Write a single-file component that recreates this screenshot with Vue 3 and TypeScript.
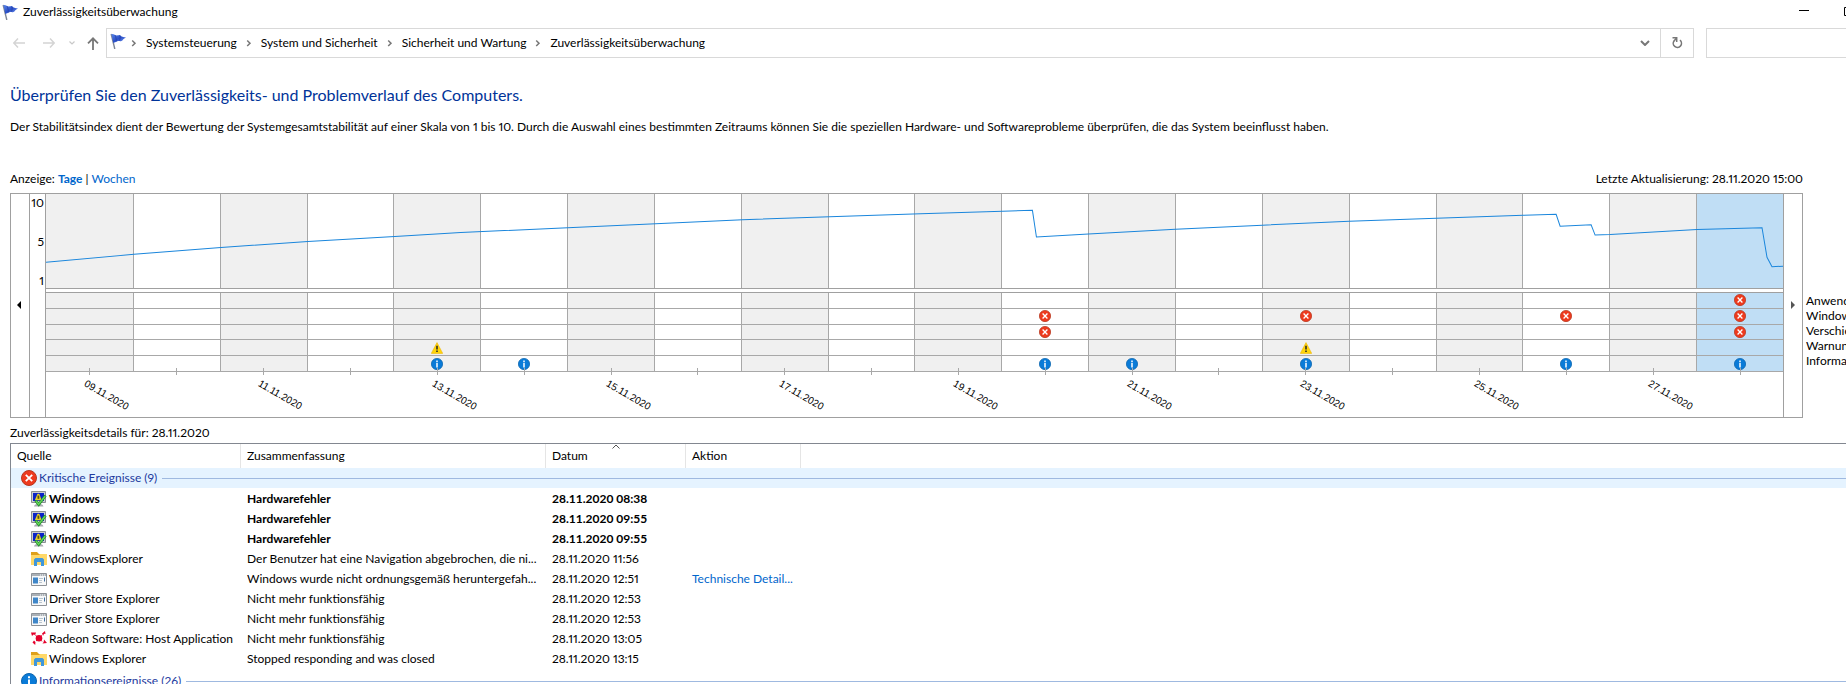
<script setup lang="ts">
import { ref } from 'vue'

type Kind = 'error' | 'warning' | 'info'
type SourceIcon = 'hardware' | 'folder' | 'window' | 'radeon'

interface Day {
  label: string
  events: (Kind | null)[]
}

interface Entry {
  icon: SourceIcon
  source: string
  summary: string
  date: string
  action?: string
  unread?: boolean
}

const crumbs = ['Systemsteuerung', 'System und Sicherheit', 'Sicherheit und Wartung', 'Zuverlässigkeitsüberwachung']
const legend = ['Anwendungsfehler', 'Windows-Fehler', 'Verschiedene Fehler', 'Warnungen', 'Informationen']
const columns = ['Quelle', 'Zusammenfassung', 'Datum', 'Aktion']
const search = ref('')

// Events per day of November: application, Windows, miscellaneous, warning, information
const eventsByDay: Record<number, (Kind | null)[]> = {
  13: [null, null, null, 'warning', 'info'],
  14: [null, null, null, null, 'info'],
  20: [null, 'error', 'error', null, 'info'],
  21: [null, null, null, null, 'info'],
  23: [null, 'error', null, 'warning', 'info'],
  26: [null, 'error', null, null, 'info'],
  28: ['error', 'error', 'error', null, 'info'],
}

const days: Day[] = Array.from({ length: 20 }, (_, i) => {
  const day = i + 9
  return {
    label: i % 2 === 0 ? `${String(day).padStart(2, '0')}.11.2020` : '',
    events: eventsByDay[day] ?? [null, null, null, null, null],
  }
})

const selected = days.length - 1

const stability: [number, number][] = [
  [0, 69], [88, 61], [175, 54], [262, 48], [349, 43], [415, 39], [522, 34], [610, 30],
  [697, 26], [784, 23], [875, 20], [957, 17.5], [987, 16.5], [991, 43.5], [1043, 40.5],
  [1130, 35.5], [1217, 31.5], [1304, 27.5], [1391, 24.5], [1478, 21.5], [1511, 20.5],
  [1515, 32.5], [1546, 31.2], [1550, 41.5], [1565, 41], [1652, 36], [1717, 34],
  [1722, 64], [1727, 73.5], [1738, 73],
]
const linePoints = stability.map((p) => p.join(',')).join(' ')

const entries: Entry[] = [
  { icon: 'hardware', source: 'Windows', summary: 'Hardwarefehler', date: '28.11.2020 08:38', unread: true },
  { icon: 'hardware', source: 'Windows', summary: 'Hardwarefehler', date: '28.11.2020 09:55', unread: true },
  { icon: 'hardware', source: 'Windows', summary: 'Hardwarefehler', date: '28.11.2020 09:55', unread: true },
  { icon: 'folder', source: 'WindowsExplorer', summary: 'Der Benutzer hat eine Navigation abgebrochen, die ni...', date: '28.11.2020 11:56' },
  { icon: 'window', source: 'Windows', summary: 'Windows wurde nicht ordnungsgemäß heruntergefah...', date: '28.11.2020 12:51', action: 'Technische Detail...' },
  { icon: 'window', source: 'Driver Store Explorer', summary: 'Nicht mehr funktionsfähig', date: '28.11.2020 12:53' },
  { icon: 'window', source: 'Driver Store Explorer', summary: 'Nicht mehr funktionsfähig', date: '28.11.2020 12:53' },
  { icon: 'radeon', source: 'Radeon Software: Host Application', summary: 'Nicht mehr funktionsfähig', date: '28.11.2020 13:05' },
  { icon: 'folder', source: 'Windows Explorer', summary: 'Stopped responding and was closed', date: '28.11.2020 13:15' },
]
</script>

<template>
  <div class="window">
    <svg class="defs" aria-hidden="true">
      <linearGradient id="flag-fill" x1="0" y1="0" x2="1" y2="1">
        <stop offset="0" stop-color="#5b86e8" />
        <stop offset="0.5" stop-color="#2b50c8" />
        <stop offset="1" stop-color="#7c9ff5" />
      </linearGradient>
      <symbol id="flag" viewBox="0 0 16 16">
        <path d="M1.200 1 4.800 16" stroke="#7d8594" stroke-width="1.400" fill="none" />
        <path d="M1.400 1.200C3.500.5 5 2.400 7 2.400S9 1.600 10 2.200s2 2.200 6 2.100c-1.500 1-2.400 1.800-3.400 2.900-1.600 1.600-3.200.6-4.600.9S5 9.800 3.300 10z" fill="url(#flag-fill)" />
        <path d="M5 2.200c.9 1.700 1.400 4 1.300 6.200M10 2.600c.3 1.500.2 3.400-.4 5" stroke="#2440a8" stroke-width=".8" fill="none" />
      </symbol>
      <symbol id="error" viewBox="0 0 16 16">
        <circle cx="8" cy="8" r="7.500" fill="#ee3a1e" stroke="#b5381f" />
        <path d="m4.800 4.800 6.400 6.400m0-6.400-6.400 6.400" stroke="#fff" stroke-width="1.800" />
      </symbol>
      <symbol id="info" viewBox="0 0 16 16">
        <circle cx="8" cy="8" r="7.500" fill="#0a7bd8" stroke="#0a64ae" />
        <path d="M8 3.200v2M8 6.400v6.400" stroke="#fff" stroke-width="2" />
      </symbol>
      <symbol id="warning" viewBox="0 0 16 16">
        <path d="M8 .8 15.600 15.200H.4z" fill="#ffd60a" stroke="#f0b400" stroke-width=".8" stroke-linejoin="round" />
        <path d="M8 5v5M8 11.400v2" stroke="#222" stroke-width="2" />
      </symbol>
      <symbol id="hardware" viewBox="0 0 16 16">
        <path d="M.5.500h14v11H.5z" fill="#c9cdd0" stroke="#8b9094" />
        <path d="M2 2h11v8H2z" fill="#0a22c8" />
        <path d="M3 15.500c.5-2 1.500-2.500 4.500-2.500s4.500.5 5 2.500z" fill="#a9adb2" />
        <path d="M3.800 9.300 6 4c.2-1.800 2.600-1.800 2.800 0l1.800 5.300z" fill="#ead02a" />
        <path d="M6.500 4.500h1.800v3.300H6.500z" fill="#5a5210" />
        <path d="m4.500 9.500 3.200 4L14.500 4.500" stroke="#1c8a24" stroke-width="2.800" fill="none" />
        <path d="m4.900 9.900 2.700 3.400L14.200 5" stroke="#62d35a" stroke-width="1.500" fill="none" />
      </symbol>
      <symbol id="folder" viewBox="0 0 16 16">
        <path d="M0 1h6l2 2h8v11H0z" fill="#dfa11c" />
        <path d="M0 4h8l1-1h7v11H0z" fill="#ffd868" />
        <path d="M3 15V8.500L4.500 7h7L13 8.500V15h-3v-4H6v4z" fill="#3f97dc" />
      </symbol>
      <symbol id="window-app" viewBox="0 0 16 16">
        <path d="M.5 2.500h15v12H.5z" fill="#f7f8f9" stroke="#8d9196" />
        <path d="M1 3h14v2H1z" fill="#aab0b6" />
        <path d="M9 4h1m1 0h1m1 0h1" stroke="#fff" />
        <path d="M2 6.500h5v6H2z" fill="#3f86c8" />
        <path d="M8 7.500h4M8 9.500h3M8 11.500h3" stroke="#b9c4cd" />
        <path d="M13.500 6.500v4" stroke="#3f6fa0" />
      </symbol>
      <symbol id="radeon" viewBox="0 0 16 16">
        <circle cx="8" cy="7.300" r="3.300" fill="#e4002b" />
        <path d="M0 1.500h5L4.200 4 2.500 3.600 1 5zM11 2.500 14 0l.5 3-1.500-.2-.8 2zM3 9.500l1.500 1.500L4.200 14 1.500 11.500zM13 8.500l3 3.500-4.500.5 1.200-1.500z" fill="#e4002b" />
        <path d="m4.500 4.500 1.500 1m4.200-.5 1-.8M5 10l1-.8m4.200.3 1 .8" stroke="#e4002b" />
      </symbol>
    </svg>

    <header class="titlebar">
      <svg class="icon16"><use href="#flag" /></svg>
      <span class="title">Zuverlässigkeitsüberwachung</span>
      <button class="caption" type="button" aria-label="Minimieren">
        <svg width="10" height="10" viewBox="0 0 10 10"><path d="M0 3.500h10" stroke="#000" /></svg>
      </button>
      <button class="caption caption-max" type="button" aria-label="Maximieren">
        <svg width="10" height="10" viewBox="0 0 10 10"><path d="M.5.500h9v8h-9z" stroke="#000" fill="none" /></svg>
      </button>
    </header>

    <nav class="navbar">
      <div class="history">
        <button type="button" disabled aria-label="Zurück">
          <svg width="12" height="10" viewBox="0 0 12 10"><path d="M5 .5.800 5 5 9.500M1 5h11" stroke="#d4d4d4" stroke-width="1.500" fill="none" /></svg>
        </button>
        <button type="button" disabled aria-label="Vorwärts">
          <svg width="12" height="10" viewBox="0 0 12 10"><path d="m7 .5 4.200 4.500L7 9.500M11 5H0" stroke="#d4d4d4" stroke-width="1.500" fill="none" /></svg>
        </button>
        <button class="recent" type="button" disabled aria-label="Zuletzt besucht">
          <svg width="6" height="4" viewBox="0 0 6 4"><path d="m.5.500 2.500 2.500L5.500.500" stroke="#c8c8c8" stroke-width="1.200" fill="none" /></svg>
        </button>
        <button type="button" aria-label="Nach oben">
          <svg width="12" height="13" viewBox="0 0 12 13"><path d="M6 13V1.500M1 6.300l5-5 5 5" stroke="#777" stroke-width="1.800" fill="none" /></svg>
        </button>
      </div>
      <div class="address">
        <svg class="icon16 address-icon"><use href="#flag" /></svg>
        <template v-for="crumb in crumbs" :key="crumb">
          <svg class="chevron" width="6" height="8" viewBox="0 0 6 8"><path d="M1.200 1.500 4 4.200 1.200 7" stroke="#777" stroke-width="1.500" fill="none" /></svg>
          <a class="crumb" href="#">{{ crumb }}</a>
        </template>
        <button class="drop" type="button" aria-label="Vorherige Orte">
          <svg width="10" height="6" viewBox="0 0 10 6"><path d="m1 1 4 4 4-4" stroke="#777" stroke-width="2" fill="none" /></svg>
        </button>
        <button class="refresh" type="button" aria-label="Aktualisieren">
          <svg width="12" height="12" viewBox="0 0 12 12">
            <path d="M9 3.200A4.100 4.100 0 1 1 3.200 3.700" stroke="#777" stroke-width="1.600" fill="none" />
            <path d="M1.500.800h4.200v4.200" stroke="#777" stroke-width="1.500" fill="none" />
            <path d="M5.500 1 3 4" stroke="#777" stroke-width="1.500" />
          </svg>
        </button>
      </div>
      <input v-model="search" class="search" type="search" aria-label="Suchen" />
    </nav>

    <main class="content">
      <h1>Überprüfen Sie den Zuverlässigkeits- und Problemverlauf des Computers.</h1>
      <p class="intro">
        Der Stabilitätsindex dient der Bewertung der Systemgesamtstabilität auf einer Skala von 1 bis 10. Durch die
        Auswahl eines bestimmten Zeitraums können Sie die speziellen Hardware- und Softwareprobleme überprüfen, die das
        System beeinflusst haben.
      </p>

      <div class="viewbar">
        <span>Anzeige: <a class="current" href="#">Tage</a> | <a href="#">Wochen</a></span>
        <span>Letzte Aktualisierung: 28.11.2020 15:00</span>
      </div>

      <section class="report">
        <div class="chart">
          <button class="scroll earlier" type="button" aria-label="Frühere Tage">
            <svg width="4" height="8" viewBox="0 0 4 8"><path d="M4 0v8L0 4z" fill="#000" /></svg>
          </button>
          <div class="scale"><span>10</span><span>5</span><span>1</span></div>
          <div class="plot">
            <div class="index">
              <div v-for="(day, i) in days" :key="i" class="day" :class="{ odd: i % 2 === 0, selected: i === selected }"></div>
              <svg class="line" viewBox="0 0 1738 95" preserveAspectRatio="none">
                <polyline :points="linePoints" fill="none" stroke="#1a86dc" vector-effect="non-scaling-stroke" />
              </svg>
            </div>
            <div class="events">
              <div v-for="(day, i) in days" :key="i" class="day stack" :class="{ odd: i % 2 === 0, selected: i === selected }">
                <div v-for="(kind, row) in day.events" :key="row" class="slot">
                  <svg v-if="kind" class="mark"><use :href="'#' + kind" /></svg>
                </div>
              </div>
            </div>
            <div class="axis">
              <div v-for="(day, i) in days" :key="i" class="tick"><span class="date">{{ day.label }}</span></div>
            </div>
          </div>
          <button class="scroll" type="button" aria-label="Spätere Tage">
            <svg width="4" height="8" viewBox="0 0 4 8"><path d="M0 0v8l4-4z" fill="#555" /></svg>
          </button>
        </div>
        <ul class="legend">
          <li v-for="item in legend" :key="item">{{ item }}</li>
        </ul>
      </section>

      <h2>Zuverlässigkeitsdetails für: 28.11.2020</h2>

      <table class="details">
        <colgroup>
          <col class="c-source" /><col class="c-summary" /><col class="c-date" /><col class="c-action" /><col />
        </colgroup>
        <thead>
          <tr>
            <th v-for="column in columns" :key="column" scope="col">
              {{ column }}
              <svg v-if="column === 'Datum'" class="sort" width="8" height="5" viewBox="0 0 8 5"><path d="m.5 4.500 3.500-3.500 3.500 3.500" stroke="#555" fill="none" /></svg>
            </th>
            <th class="rest"></th>
          </tr>
        </thead>
        <tbody>
          <tr class="group active">
            <th colspan="5" scope="rowgroup">
              <div class="group-head"><svg class="icon16"><use href="#error" /></svg><span>Kritische Ereignisse (9)</span></div>
            </th>
          </tr>
          <tr v-for="(entry, i) in entries" :key="i" class="entry" :class="{ unread: entry.unread }">
            <td>
              <div class="source">
                <svg class="icon16"><use :href="entry.icon === 'window' ? '#window-app' : '#' + entry.icon" /></svg>
                <span>{{ entry.source }}</span>
              </div>
            </td>
            <td>{{ entry.summary }}</td>
            <td>{{ entry.date }}</td>
            <td><a v-if="entry.action" href="#">{{ entry.action }}</a></td>
            <td></td>
          </tr>
          <tr class="group">
            <th colspan="5" scope="rowgroup">
              <div class="group-head"><svg class="icon16"><use href="#info" /></svg><span>Informationsereignisse (26)</span></div>
            </th>
          </tr>
        </tbody>
      </table>
    </main>
  </div>
</template>

<style>
body {
  margin: 0;
  background: #fff;
}
</style>

<style scoped>
* {
  box-sizing: border-box;
}

.window {
  height: 100vh;
  overflow: hidden;
  background: #fff;
  color: #000;
  font: 12px/16px Lato, "Open Sans", sans-serif;
  font-variant-numeric: proportional-nums;
}

.defs {
  display: block;
  width: 0;
  height: 0;
}

button {
  display: flex;
  align-items: center;
  justify-content: center;
  padding: 0;
  border: 0;
  background: none;
}

a {
  color: #0066cc;
  text-decoration: none;
}

svg {
  flex: none;
}

.icon16 {
  display: block;
  width: 16px;
  height: 16px;
}

.titlebar {
  display: flex;
  align-items: center;
  height: 24px;
  padding-left: 2px;
}

.title {
  flex: 1;
  margin-left: 5px;
}

.caption {
  width: 46px;
  height: 20px;
}

.caption-max {
  justify-content: flex-start;
  width: 2px;
  margin-left: 17px;
}

.navbar {
  display: flex;
  height: 30px;
  margin-top: 4px;
}

.history {
  display: flex;
  align-items: center;
  gap: 18px;
  width: 106px;
  padding-left: 13px;
}

.recent {
  margin: 0 -6px 0 -4px;
}

.address {
  display: flex;
  flex: 1;
  align-items: center;
  border: 1px solid #d9d9d9;
}

.address-icon {
  margin: 0 5px 4px 3px;
}

.chevron {
  margin: 0 9px 0 0;
}

.crumb {
  margin-right: 9px;
  color: #000;
}

.drop {
  width: 30px;
  height: 100%;
  margin-left: auto;
}

.refresh {
  width: 33px;
  height: 100%;
  border-left: 1px solid #d9d9d9;
}

.search {
  width: 140px;
  margin: 0 0 0 12px;
  border: 1px solid #d9d9d9;
  border-right: 0;
  border-radius: 0;
  background: #fff;
  appearance: none;
}

.content {
  padding-left: 10px;
}

h1 {
  margin: 25px 0 0;
  color: #003399;
  font-size: 16px;
  font-weight: 400;
  line-height: 24px;
}

.intro {
  margin: 12px 0 0;
}

.viewbar {
  display: flex;
  justify-content: space-between;
  margin: 36px 43px 0 0;
}

.current {
  font-weight: 700;
}

.report {
  display: flex;
  margin-top: 6px;
}

.chart {
  display: flex;
  flex: 1;
  border: 1px solid #a0a0a0;
}

.scroll {
  width: 18px;
  padding-bottom: 2px;
}

.earlier {
  width: 19px;
  padding-right: 2px;
  border-right: 1px solid #a0a0a0;
}

.scale {
  display: flex;
  flex-direction: column;
  justify-content: space-between;
  width: 15px;
  height: 95px;
  padding: 1px 1px 0 0;
  text-align: right;
}

.plot {
  flex: 1;
  border: 1px solid #a0a0a0;
  border-width: 0 1px;
}

.index,
.events,
.axis {
  display: grid;
  grid-template-columns: repeat(20, minmax(0, 1fr));
}

.index {
  position: relative;
  height: 95px;
  border-bottom: 1px solid #a0a0a0;
}

.line {
  position: absolute;
  inset: 0;
  width: 100%;
  height: 100%;
}

.events {
  height: 80px;
  margin-top: 3px;
  border-top: 1px solid #a0a0a0;
}

.day + .day {
  border-left: 1px solid #a8a8a8;
}

.odd {
  background: #f0f0f0;
}

.selected {
  background: #c0def5;
}

.stack {
  display: grid;
  grid-template-rows: repeat(5, 1fr);
}

.slot {
  display: flex;
  align-items: center;
  justify-content: center;
  border-bottom: 1px solid #a8a8a8;
}

.mark {
  width: 12px;
  height: 12px;
}

.axis {
  height: 45px;
}

.tick {
  position: relative;
  padding-left: calc(50% - 4px);
}

.tick::before {
  position: absolute;
  top: -4px;
  left: 50%;
  width: 1px;
  height: 7px;
  background: #a8a8a8;
  content: "";
}

.date {
  display: block;
  width: max-content;
  font-family: "Liberation Sans Narrow", "Liberation Sans", sans-serif;
  font-size: 10px;
  line-height: 22px;
  transform: rotate(30deg);
  transform-origin: 0 50%;
}

.legend {
  width: 43px;
  margin: 100px 0 0;
  padding: 0 0 0 3px;
  overflow: hidden;
  line-height: 15px;
  list-style: none;
  white-space: nowrap;
}

h2 {
  margin: 7px 0 2px;
  font-size: 12px;
  font-weight: 400;
  line-height: 16px;
}

.details {
  width: 100%;
  border-top: 1px solid #828790;
  border-left: 1px solid #828790;
  border-spacing: 0;
  table-layout: fixed;
}

.c-source {
  width: 230px;
}

.c-summary {
  width: 305px;
}

.c-date {
  width: 140px;
}

.c-action {
  width: 115px;
}

.details th {
  padding: 0 0 0 6px;
  font-weight: 400;
  text-align: left;
}

.details thead th {
  position: relative;
  height: 24px;
  border-right: 1px solid #e5e5e5;
}

.details thead .rest {
  border-right: 0;
}

.sort {
  position: absolute;
  top: 0;
  left: calc(50% - 4px);
}

.details td {
  height: 20px;
  padding: 0 0 0 6px;
  overflow: hidden;
  white-space: nowrap;
}

.unread td {
  font-weight: 700;
  font-variant-numeric: normal;
}

.source {
  display: flex;
  align-items: center;
  gap: 2px;
  padding-left: 14px;
}

.details .group th {
  height: 24px;
  padding: 0 0 0 10px;
}

.details .active th {
  height: 21px;
  border-bottom: 1px solid #fff;
  background: #e5f3ff;
}

.group-head {
  display: flex;
  align-items: center;
  gap: 2px;
  color: #1e3a9e;
}

.group-head::after {
  flex: 1;
  height: 1px;
  margin-left: 3px;
  background: #9fb9e0;
  content: "";
}
</style>
